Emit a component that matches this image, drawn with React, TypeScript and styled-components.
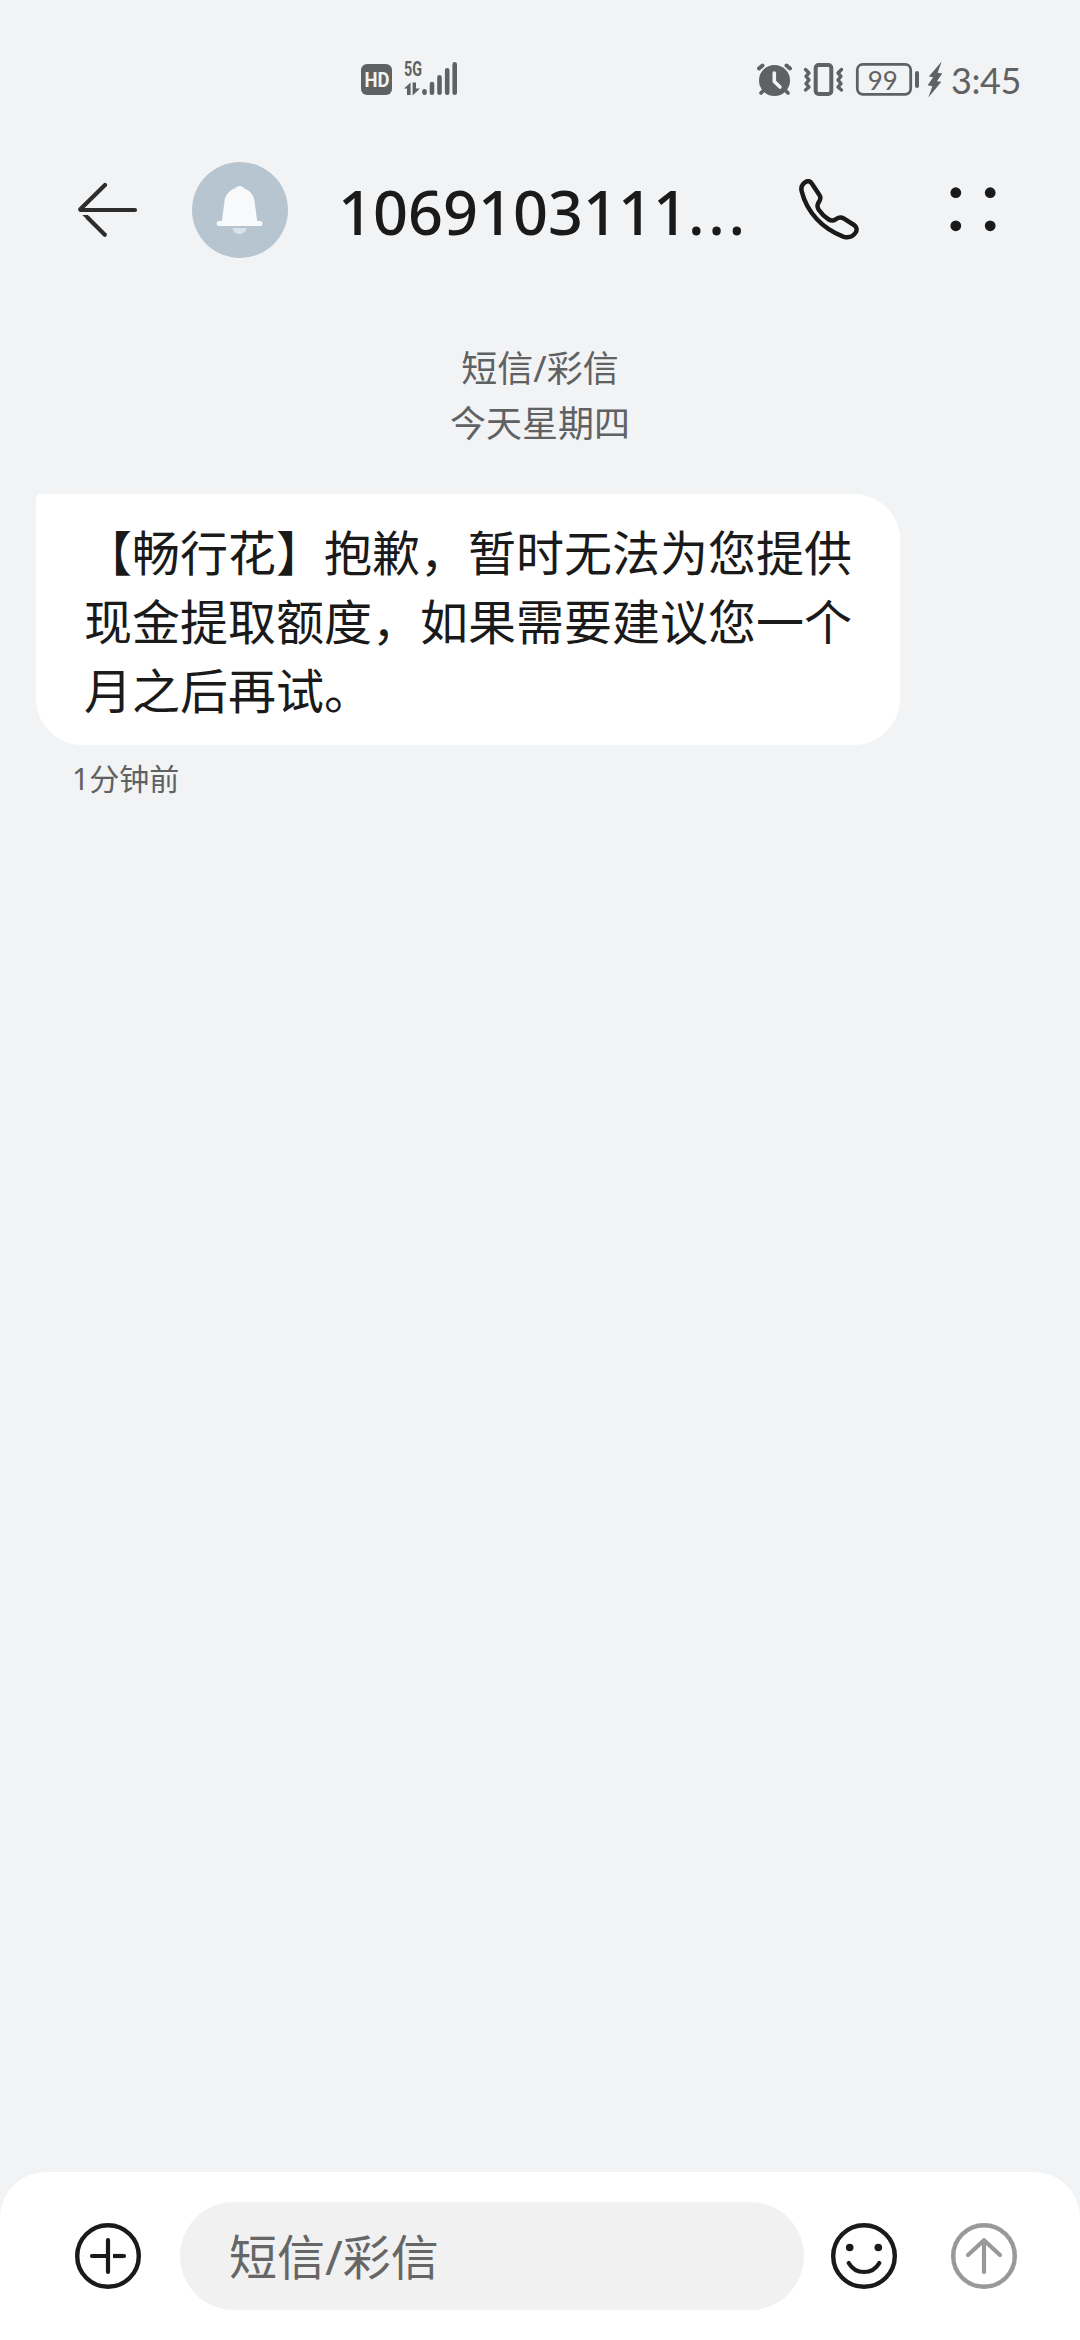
import React from "react";
import styled, { createGlobalStyle } from "styled-components";

const GlobalStyle = createGlobalStyle`
  * { box-sizing: border-box; }
  html, body { margin: 0; padding: 0; background: #f1f3f5; }
  svg { display: block; flex: none; }
`;

const fonts = `"Noto Sans", "Noto Sans CJK SC", sans-serif`;
const ink = "#1a1a1a";
const grey = "#5f6163";

const Screen = styled.div`
  width: 1080px;
  height: 2340px;
  display: flex;
  flex-direction: column;
  overflow: hidden;
  background: #f1f3f5;
  color: ${ink};
  font-family: ${fonts};
`;

const StatusBar = styled.header`
  height: 130px;
  padding: 54px 53px 0 361px;
  display: flex;
  justify-content: space-between;
  align-items: flex-start;
  color: ${grey};
`;

const StatusGroup = styled.div<{ $gap: number }>`
  display: flex;
  align-items: flex-start;
  gap: ${(p) => p.$gap}px;
`;

const Clock = styled.time`
  width: 76px;
  padding-top: 4px;
  font-family: Lato, sans-serif;
  font-size: 36px;
  letter-spacing: -0.4px;
  line-height: 44px;
  white-space: nowrap;
`;

const TitleBar = styled.nav`
  height: 160px;
  padding: 0 83px 0 78px;
  display: flex;
  align-items: center;
`;

const IconButton = styled.button<{ $color?: string }>`
  border: 0;
  padding: 0;
  background: none;
  color: ${(p) => p.$color ?? ink};
  flex: none;
`;

const Avatar = styled.div`
  width: 96px;
  height: 96px;
  margin-left: 54px;
  flex: none;
  border-radius: 50%;
  background: #b7c5d1;
`;

const Title = styled.h1`
  width: 510px;
  flex: none;
  margin: 0;
  padding: 4px 0 0 50px;
  font-size: 61.2px;
  font-weight: 500;
  line-height: 84px;
  white-space: nowrap;
`;

const Dots = styled.span`
  letter-spacing: 3.6px;
`;

const TitleActions = styled.div`
  flex: 1;
  display: flex;
  justify-content: space-between;
  align-items: center;
`;

const Thread = styled.main`
  flex: 1;
  padding: 51px 36px 0;
`;

const ThreadInfo = styled.div`
  display: flex;
  flex-direction: column;
  align-items: center;
  font-size: 36px;
  line-height: 55px;
  color: ${grey};
`;

const Bubble = styled.p`
  width: 864px;
  height: 251px;
  margin: 43px 0 0;
  padding: 22px 48px;
  border-radius: 5px 46px 46px 46px;
  background: #fff;
  font-size: 48px;
  line-height: 69px;
  font-family: "Noto Sans CJK SC", sans-serif;
  text-spacing-trim: space-all;
`;

const SentAt = styled.div`
  padding: 13px 0 0 36px;
  font-size: 30px;
  line-height: 42px;
  color: ${grey};
`;

const Composer = styled.footer`
  height: 168px;
  padding: 30px 63px 0 75px;
  display: flex;
  align-items: flex-start;
  border-radius: 46px 46px 0 0;
  background: #fff;
`;

const ComposerSlot = styled.div`
  height: 108px;
  display: flex;
  align-items: center;
`;

const Field = styled.div`
  width: 624px;
  height: 108px;
  margin: 0 27px 0 39px;
  padding: 1px 49px 0;
  border-radius: 54px;
  background: #f1f1f1;
  color: #666;
  font-size: 48px;
  line-height: 108px;
`;

const SendSlot = styled(ComposerSlot)`
  margin-left: 54px;
`;

const HdBadge = () => (
  <svg width="32" height="46" viewBox="361 54 32 46">
    <rect x="361" y="64" width="31" height="31" rx="6" fill="currentColor" />
    <text x="364.5" y="87" fontFamily="Roboto, sans-serif" fontWeight="700" fontSize="20" textLength="25" lengthAdjust="spacingAndGlyphs" fill="#f1f3f5">HD</text>
  </svg>
);

const Signal = () => (
  <svg width="56" height="46" viewBox="403 54 56 46" fill="currentColor">
    <text x="404" y="76.3" fontFamily="Roboto, sans-serif" fontWeight="700" fontSize="19.5" textLength="18" lengthAdjust="spacingAndGlyphs">5G</text>
    <path d="M404 88.6 L410.6 82.5 V95 H407 V88.6Z M412.6 82.5 H416 V88.5 H420 L412.6 95.5Z" />
    <g stroke="currentColor" strokeWidth="4.6" strokeLinecap="round">
      <path d="M424.5 91.3V92.7M432 84V92.7M439.5 77.3V92.7M447.2 70.3V92.7M454.7 64.3V92.7" />
    </g>
  </svg>
);

const Alarm = () => (
  <svg width="36" height="46" viewBox="757 54 36 46" fill="none" stroke="currentColor" strokeLinecap="round">
    <circle cx="774.5" cy="80.5" r="15.5" fill="currentColor" stroke="none" />
    <path d="M759 68.5L762.5 65.5M790 68.5L786.5 65.5" strokeWidth="4" />
    <path d="M764 90L761 93M785 90L788 93" strokeWidth="3.6" />
    <path d="M774.3 73V81.5L780 87" stroke="#f1f3f5" strokeWidth="3.6" strokeLinejoin="round" />
  </svg>
);

const Vibrate = () => (
  <svg width="46" height="46" viewBox="801 54 46 46" fill="none" stroke="currentColor" strokeLinecap="round" strokeLinejoin="round">
    <rect x="815.7" y="65" width="15.6" height="29" rx="3" strokeWidth="4" />
    <path d="M805.5 69.5L809 73L806 76.3L809 80L806 83.6L809 87L805.5 90" strokeWidth="3.4" />
    <path d="M841.5 69.5L838 73L841 76.3L838 80L841 83.6L838 87L841.5 90" strokeWidth="3.4" />
  </svg>
);

const Battery = () => (
  <svg width="64" height="46" viewBox="855 54 64 46">
    <rect x="857.3" y="64.3" width="53.4" height="30" rx="5.5" fill="none" stroke="currentColor" strokeWidth="2.8" />
    <rect x="915" y="71" width="4" height="17" rx="2" fill="currentColor" />
    <text x="867.8" y="89.7" fontFamily="Lato, sans-serif" fontSize="27.5" textLength="30" lengthAdjust="spacingAndGlyphs" fill="currentColor">99</text>
  </svg>
);

const Bolt = () => (
  <svg width="16" height="46" viewBox="927 54 16 46" fill="currentColor">
    <path d="M941.7 61.5L928.8 76.6L933.2 77.2L927.6 85.2L932.4 86.2L928.3 97.5L941.4 81.8L937 81.2L942.2 73.6L937.6 72.8Z" />
  </svg>
);

const BackArrow = () => (
  <svg width="60" height="60" viewBox="78 180 60 60" fill="none" stroke="#2d2d2d" strokeWidth="4.2" strokeLinecap="round">
    <path d="M80.5 210H135M80.3 209.3L105 185" />
    <path d="M88 218L104.8 234.8" />
    <path d="M82.3 215H87.8L90.5 218L87 219.5Z" fill="#2d2d2d" stroke="none" />
  </svg>
);

const Bell = () => (
  <svg width="96" height="96" viewBox="192 162 96 96">
    <path d="M232.5 228H246.5C246 231.7 243.4 234 239.5 234S233 231.7 232.5 228Z" fill="#dae2e8" />
    <path d="M235.3 188.3C236.5 186.8 238 186 239.7 186S242.8 186.8 244 188.3C250 190.5 254.2 195.5 254.6 202L257.2 221H260A2.4 2.4 0 0 1 260 226H219.2A2.4 2.4 0 0 1 219.2 221H221.9L224.4 202C224.9 195.5 229.2 190.2 235.3 188.3Z" fill="#f7f9fb" />
  </svg>
);

const Phone = () => (
  <svg width="62" height="62" viewBox="798 179 62 62" fill="none" stroke="currentColor" strokeWidth="4.5" strokeLinejoin="round">
    <path d="M811.8 183.5L819.4 195C821 197.3 820.8 198.5 819.5 200.8L818.1 203.4C817 205.8 817.3 207.5 818.7 209.7C821.6 214 825 217.2 828.8 219.5C831.3 221 833.3 221 835.6 219.4C838.6 217.2 840.7 216.5 843.6 218.4L854 225C856.8 226.8 857.2 229.8 855.7 232.4C852.8 236.9 848.6 238.3 843.2 236.6C822.6 228.7 807 212.5 801.8 191.8C800.6 187 802.5 183.5 806 181.7C808.3 180.6 810.4 181.4 811.8 183.5Z" />
  </svg>
);

const MoreDots = () => (
  <svg width="48" height="62" viewBox="948 179 48 62" fill="currentColor">
    <circle cx="954.8" cy="192.7" r="5.4" />
    <circle cx="989.2" cy="192.7" r="5.4" />
    <circle cx="954.8" cy="225.8" r="5.4" />
    <circle cx="989.2" cy="225.8" r="5.4" />
  </svg>
);

const Ring = ({ children }: { children: React.ReactNode }) => (
  <svg width="66" height="66" viewBox="-33 -33 66 66" fill="none" stroke="currentColor" strokeLinecap="round" strokeLinejoin="round">
    <circle r="30.8" strokeWidth="4.4" />
    {children}
  </svg>
);

const App = () => (
  <>
    <GlobalStyle />
    <Screen>
      <StatusBar>
        <StatusGroup $gap={10}>
          <HdBadge />
          <Signal />
        </StatusGroup>
        <StatusGroup $gap={8}>
          <Alarm />
          <Vibrate />
          <Battery />
          <Bolt />
          <Clock>3:45</Clock>
        </StatusGroup>
      </StatusBar>

      <TitleBar>
        <IconButton aria-label="返回"><BackArrow /></IconButton>
        <Avatar><Bell /></Avatar>
        <Title>1069103111<Dots>...</Dots></Title>
        <TitleActions>
          <IconButton aria-label="拨打"><Phone /></IconButton>
          <IconButton aria-label="更多"><MoreDots /></IconButton>
        </TitleActions>
      </TitleBar>

      <Thread>
        <ThreadInfo>
          <span>短信/彩信</span>
          <span>今天星期四</span>
        </ThreadInfo>
        <Bubble>【畅行花】抱歉，暂时无法为您提供现金提取额度，如果需要建议您一个月之后再试。</Bubble>
        <SentAt>1分钟前</SentAt>
      </Thread>

      <Composer>
        <ComposerSlot>
          <IconButton aria-label="添加">
            <Ring>
              <path d="M0 -16V16M-16 0H0" strokeWidth="4.2" />
              <path d="M5 0H15" strokeWidth="4.2" strokeLinecap="butt" />
              <path d="M14 0H16" strokeWidth="4.2" />
            </Ring>
          </IconButton>
        </ComposerSlot>
        <Field>短信/彩信</Field>
        <ComposerSlot>
          <IconButton aria-label="表情">
            <Ring>
              <circle cx="-14.3" cy="-8.5" r="3.8" fill="currentColor" stroke="none" />
              <circle cx="14.3" cy="-8.5" r="3.8" fill="currentColor" stroke="none" />
              <path d="M-15.3 7C-12 12.8 -6.5 16 0 16S12 12.8 15.3 7" strokeWidth="4.2" />
            </Ring>
          </IconButton>
        </ComposerSlot>
        <SendSlot>
          <IconButton aria-label="发送" $color="#999">
            <Ring>
              <path d="M0 16V-15.7M-16 -1L0 -15.7L16 -1" strokeWidth="4.2" />
            </Ring>
          </IconButton>
        </SendSlot>
      </Composer>
    </Screen>
  </>
);

export default App;
